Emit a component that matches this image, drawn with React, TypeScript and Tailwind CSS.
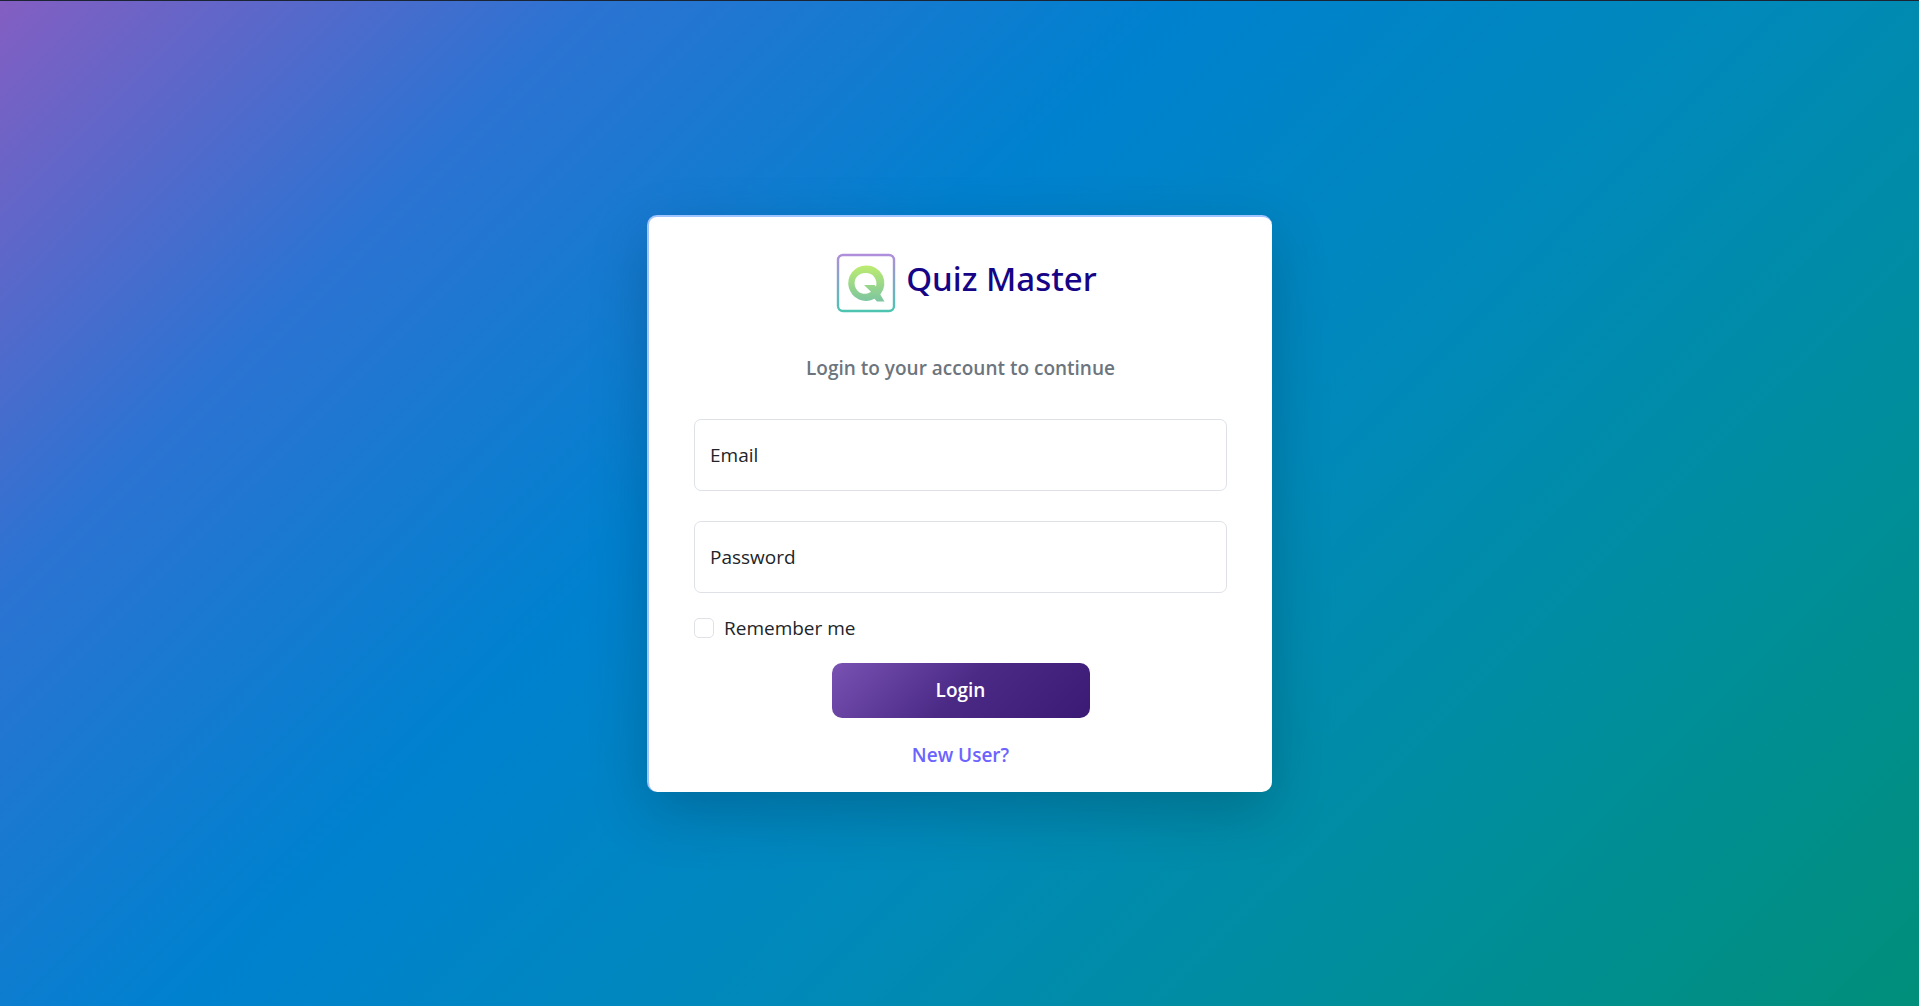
export default function App() {
  const fields = [
    { id: "email", label: "Email", type: "email" },
    { id: "password", label: "Password", type: "password" },
  ];
  return (
    <main className="flex min-h-screen items-center justify-center border-t border-[#1b2433] bg-[linear-gradient(135deg,#845ec2,#2c73d2,#0081cf,#0089ba,#008e9b,#008f7a)] font-['Open_Sans',sans-serif] text-[#212529]">
      <form
        onSubmit={(e) => e.preventDefault()}
        className="flex w-full max-w-[625px] flex-col rounded-[10px] border-t-2 border-l-2 border-[#a0c4ff] bg-white px-[45px] pt-9 pb-[22px] shadow-[0_20px_60px_rgba(0,0,0,0.2)]"
      >
        <header className="flex items-start justify-center gap-[10px] pl-3">
          <svg viewBox="0 0 60 60" className="size-[60px]" fill="none" aria-hidden="true">
            <defs>
              <linearGradient id="frame" x1="0" y1="0" x2="0" y2="1">
                <stop offset="0" stopColor="#b08edb" />
                <stop offset="1" stopColor="#4cc4b0" />
              </linearGradient>
              <linearGradient id="letter" x1="0" y1="0" x2="0" y2="1">
                <stop offset="0" stopColor="#bdec70" />
                <stop offset="1" stopColor="#7cc5a0" />
              </linearGradient>
            </defs>
            <rect x="2" y="2" width="56" height="56" rx="5" stroke="url(#frame)" strokeWidth="2.4" />
            <path
              fill="url(#letter)"
              fillRule="evenodd"
              d="M30 12.500a17.700 17.700 0 1 0 8.500 33.200L41 48.500h7.500L44.300 41.500A17.700 17.700 0 0 0 30 12.500ZM30 20a10.400 10.400 0 0 1 10 13.500L38.500 32H28L35 38.800A10.400 10.400 0 1 1 30 20Z"
            />
          </svg>
          <h1 className="font-['Noto_Sans',sans-serif] text-[33px] leading-[52px] font-medium text-[#150485]">
            Quiz Master
          </h1>
        </header>
        <p className="mt-10 text-center text-[19px] leading-[30px] font-semibold text-[#6c757d]">
          Login to your account to continue
        </p>
        <div className="mt-9 flex flex-col gap-[30px]">
          {fields.map((f) => (
            <div key={f.id} className="relative">
              <input
                id={f.id}
                type={f.type}
                className="block h-[72px] w-full rounded-[7px] border border-[#dee2e6] bg-white px-4 text-[19px] outline-none"
              />
              <label htmlFor={f.id} className="pointer-events-none absolute inset-y-0 left-4 flex items-center text-[19px]">
                {f.label}
              </label>
            </div>
          ))}
        </div>
        <div className="mt-5 flex items-center gap-[10px]">
          <input
            id="remember"
            type="checkbox"
            className="size-5 appearance-none rounded-[5px] border border-[#dee2e6] bg-white checked:bg-[#4b2a86]"
          />
          <label htmlFor="remember" className="text-[19px] leading-[30px]">
            Remember me
          </label>
        </div>
        <button
          type="submit"
          className="mt-5 h-[55px] w-[258px] self-center rounded-[10px] bg-[linear-gradient(135deg,#7952b3,#4b2a86_50%,#3a1a74)] text-[19px] font-semibold text-white"
        >
          Login
        </button>
        <a href="#register" className="mt-[22px] self-center text-[19px] leading-[30px] font-semibold text-[#6c63ff]">
          New User?
        </a>
      </form>
    </main>
  );
}
